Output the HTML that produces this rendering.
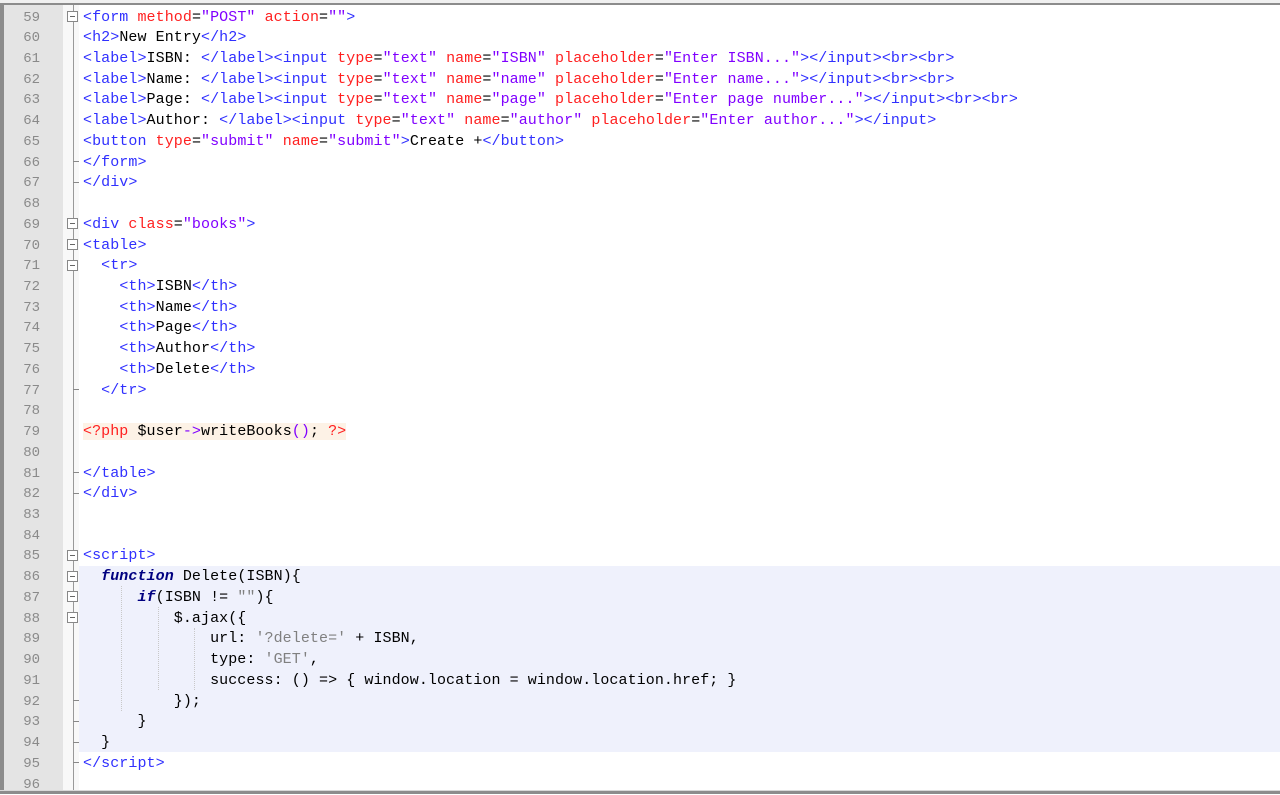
<!DOCTYPE html>
<html><head><meta charset="utf-8"><style>
body{margin:0;width:1280px;height:794px;background:#fff;position:relative;overflow:hidden;font-family:"Liberation Mono",monospace;font-size:15px}
.ln{position:absolute;left:4px;width:36px;text-align:right;color:#8a8a8a;height:20.73px;line-height:20.73px;font-size:14px}
.l{position:absolute;left:83px;white-space:pre;height:20.73px;line-height:20.73px;color:#000;letter-spacing:0.075px}
.t{color:#3030ff}.a{color:#ff2020}.v{color:#8000ff}.s{color:#808080}.k{color:#000080;font-weight:bold;font-style:italic}
.php{background:#fdf2e6}
.fb{position:absolute;left:67px;width:9px;height:9px;border:1px solid #888;background:#fff}
.fb:after{content:"";position:absolute;left:2px;top:4px;width:5px;height:1px;background:#666}
.ft{position:absolute;left:73px;width:6px;height:1px;background:#888}
.g{position:absolute;border-left:1px dotted #c8c8c8}
</style></head><body>
<div style="position:absolute;left:0;top:0;width:1280px;height:4px;background:#f0f0f0"></div>
<div style="position:absolute;left:0;top:3px;width:1280px;height:2px;background:#8c8c8c"></div>
<div style="position:absolute;left:0;top:3px;width:4px;height:790px;background:#8c8c8c"></div>
<div style="position:absolute;left:4px;top:5px;width:59px;height:786px;background:#e4e4e4"></div>
<div style="position:absolute;left:63px;top:5px;width:16px;height:786px;background:#f8f8f8"></div>
<div style="position:absolute;left:73px;top:5px;width:1px;height:786px;background:#999"></div>
<div style="position:absolute;left:79px;top:565.7px;width:1201px;height:186.6px;background:#eff1fc"></div>
<div style="position:absolute;left:0;top:790px;width:1280px;height:1px;background:#d8d8d8"></div>
<div style="position:absolute;left:0;top:791px;width:1280px;height:3px;background:#8c8c8c"></div>
<div id="c"></div>
<script>
var L=[
'<span class=t>&lt;form </span><span class=a>method</span>=<span class=v>"POST"</span> <span class=a>action</span>=<span class=v>""</span><span class=t>&gt;</span>',
'<span class=t>&lt;h2&gt;</span>New Entry<span class=t>&lt;/h2&gt;</span>',
'<span class=t>&lt;label&gt;</span>ISBN: <span class=t>&lt;/label&gt;&lt;input </span><span class=a>type</span>=<span class=v>"text"</span> <span class=a>name</span>=<span class=v>"ISBN"</span> <span class=a>placeholder</span>=<span class=v>"Enter ISBN..."</span><span class=t>&gt;&lt;/input&gt;&lt;br&gt;&lt;br&gt;</span>',
'<span class=t>&lt;label&gt;</span>Name: <span class=t>&lt;/label&gt;&lt;input </span><span class=a>type</span>=<span class=v>"text"</span> <span class=a>name</span>=<span class=v>"name"</span> <span class=a>placeholder</span>=<span class=v>"Enter name..."</span><span class=t>&gt;&lt;/input&gt;&lt;br&gt;&lt;br&gt;</span>',
'<span class=t>&lt;label&gt;</span>Page: <span class=t>&lt;/label&gt;&lt;input </span><span class=a>type</span>=<span class=v>"text"</span> <span class=a>name</span>=<span class=v>"page"</span> <span class=a>placeholder</span>=<span class=v>"Enter page number..."</span><span class=t>&gt;&lt;/input&gt;&lt;br&gt;&lt;br&gt;</span>',
'<span class=t>&lt;label&gt;</span>Author: <span class=t>&lt;/label&gt;&lt;input </span><span class=a>type</span>=<span class=v>"text"</span> <span class=a>name</span>=<span class=v>"author"</span> <span class=a>placeholder</span>=<span class=v>"Enter author..."</span><span class=t>&gt;&lt;/input&gt;</span>',
'<span class=t>&lt;button </span><span class=a>type</span>=<span class=v>"submit"</span> <span class=a>name</span>=<span class=v>"submit"</span><span class=t>&gt;</span>Create +<span class=t>&lt;/button&gt;</span>',
'<span class=t>&lt;/form&gt;</span>',
'<span class=t>&lt;/div&gt;</span>',
'',
'<span class=t>&lt;div </span><span class=a>class</span>=<span class=v>"books"</span><span class=t>&gt;</span>',
'<span class=t>&lt;table&gt;</span>',
'  <span class=t>&lt;tr&gt;</span>',
'    <span class=t>&lt;th&gt;</span>ISBN<span class=t>&lt;/th&gt;</span>',
'    <span class=t>&lt;th&gt;</span>Name<span class=t>&lt;/th&gt;</span>',
'    <span class=t>&lt;th&gt;</span>Page<span class=t>&lt;/th&gt;</span>',
'    <span class=t>&lt;th&gt;</span>Author<span class=t>&lt;/th&gt;</span>',
'    <span class=t>&lt;th&gt;</span>Delete<span class=t>&lt;/th&gt;</span>',
'  <span class=t>&lt;/tr&gt;</span>',
'',
'<span class=php><span class=a>&lt;?php</span> $user<span class=v>-&gt;</span>writeBooks<span class=v>()</span>; <span class=a>?&gt;</span></span>',
'',
'<span class=t>&lt;/table&gt;</span>',
'<span class=t>&lt;/div&gt;</span>',
'','',
'<span class=t>&lt;script&gt;</span>',
'  <span class=k>function</span> Delete(ISBN){',
'      <span class=k>if</span>(ISBN != <span class=s>""</span>){',
'          $.ajax({',
'              url: <span class=s>\'?delete=\'</span> + ISBN,',
'              type: <span class=s>\'GET\'</span>,',
'              success: () =&gt; { window.location = window.location.href; }',
'          });',
'      }',
'  }',
'<span class=t>&lt;/script&gt;</span>',
''];
var h='',H=20.73;
var boxes=[59,69,70,71,85,86,87,88],ticks=[66,67,77,81,82,92,93,94,95];
for(var i=0;i<L.length;i++){var n=59+i,y=6+i*H,ty=y+1.5;
h+='<div class=ln style="top:'+ty+'px">'+n+'</div><div class=l style="top:'+ty+'px">'+L[i]+'</div>';
if(boxes.indexOf(n)>=0)h+='<div class=fb style="top:'+(y+5)+'px"></div>';
if(ticks.indexOf(n)>=0)h+='<div class=ft style="top:'+(y+10)+'px"></div>';}
var gy=6+28*H;
h+='<div class=g style="left:121px;top:'+gy+'px;height:'+(6*H)+'px"></div>';
h+='<div class=g style="left:158px;top:'+(gy+H)+'px;height:'+(4*H)+'px"></div>';
h+='<div class=g style="left:194px;top:'+(gy+2*H)+'px;height:'+(3*H)+'px"></div>';
document.getElementById('c').innerHTML=h;
</script>
</body></html>
